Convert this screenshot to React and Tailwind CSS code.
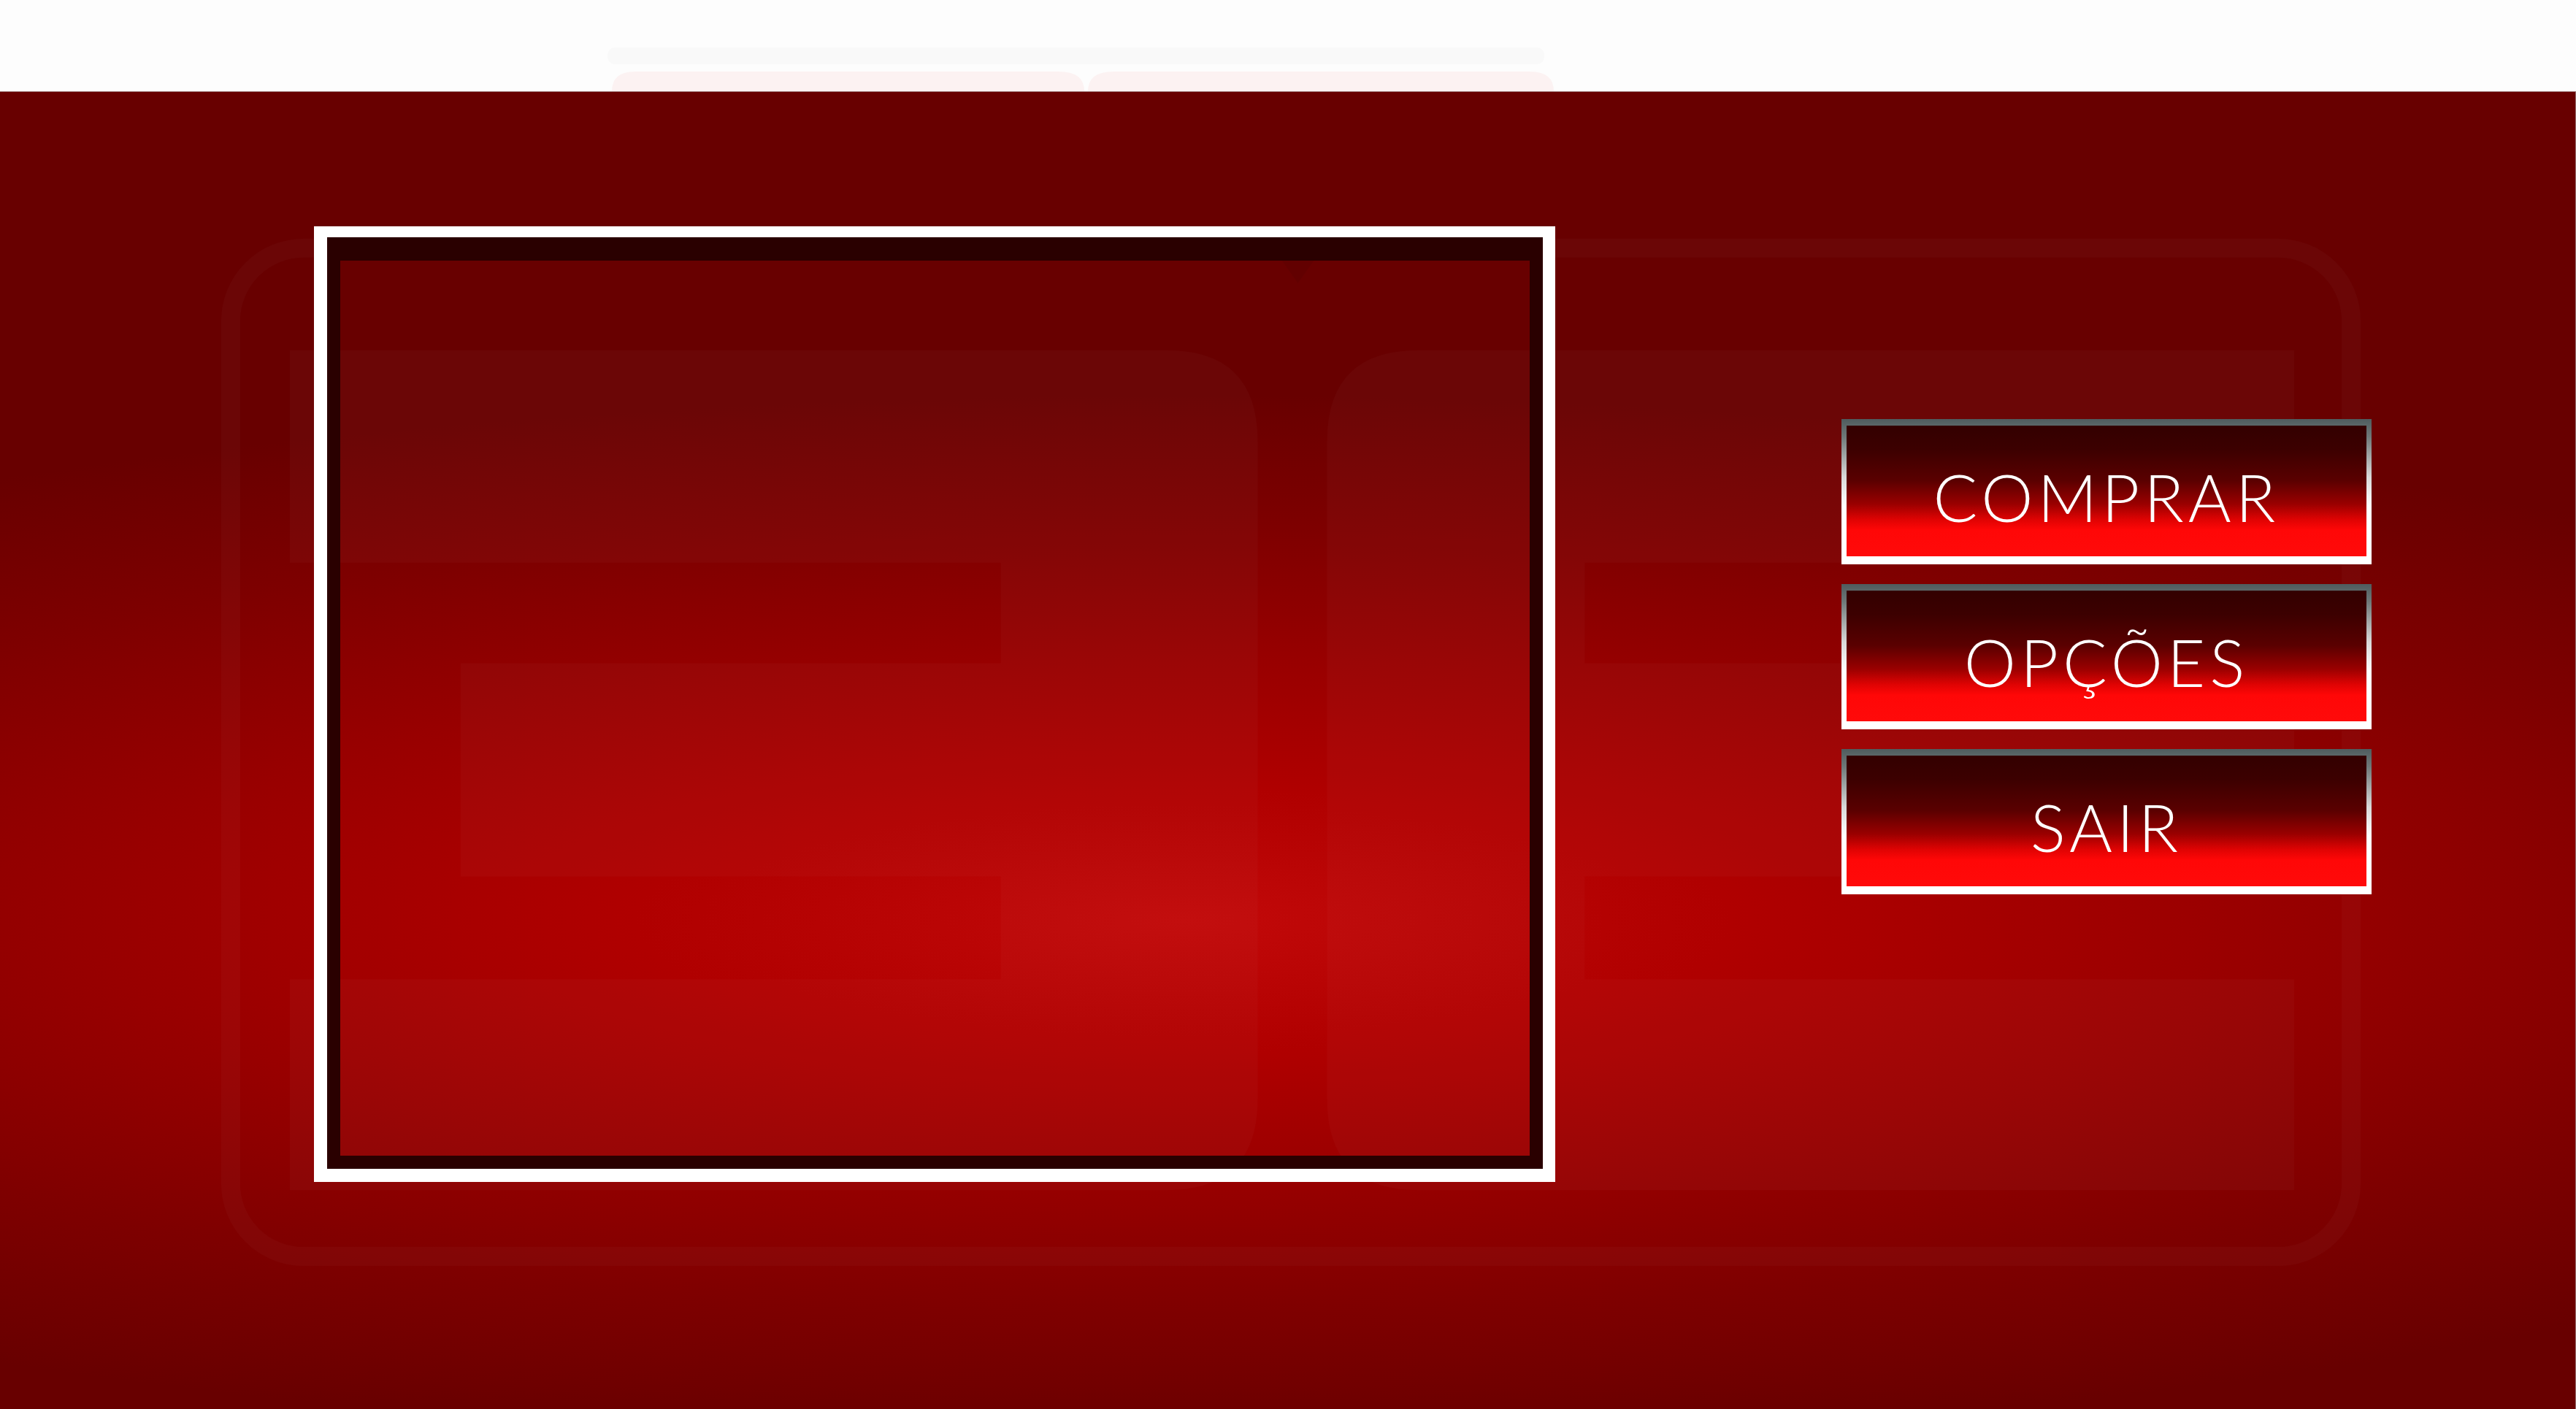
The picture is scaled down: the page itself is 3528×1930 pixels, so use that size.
import React from "react";

const buttons = ["COMPRAR", "OPÇÕES", "SAIR"];

const MenuButton = ({ label }) => (
  <div className="w-[726px] h-[199px] pt-[9px] px-[7px] pb-[11px] bg-[linear-gradient(180deg,#4f5c5e_0%,#6e7878_12%,#d9d9d9_40%,#ffffff_60%,#ffffff_100%)]">
    <button className="w-full h-full flex items-center justify-center pt-[14px] bg-[linear-gradient(180deg,#330000_0%,#3c0000_18%,#5a0000_42%,#9a0000_60%,#e00303_72%,#ff0707_80%,#ff0a0a_100%)] text-white text-[90px] font-light leading-none tracking-[6px] font-['Lato','Inter','Liberation_Sans',sans-serif]">
      {label}
    </button>
  </div>
);

// marca d'agua no fundo
const Watermark = () => (
  <svg className="absolute inset-0 w-full h-full pointer-events-none" viewBox="0 0 3528 1805" preserveAspectRatio="none">
    <rect x="316" y="214" width="2905" height="1382" rx="100" fill="none" stroke="rgba(255,255,255,0.022)" strokeWidth="26" />
    <path d="M1744 214 L1778 262 L1812 214 Z" fill="rgba(0,0,0,0.05)" />
    <g fill="rgba(255,255,255,0.024)">
      <path d="M397 354 H1598 Q1723 354 1723 479 V1380 Q1723 1505 1598 1505 H397 V1216 H1371 V1075 H631 V783 H1371 V645 H397 Z" />
      <path d="M1943 354 H3143 V645 H2171 V783 H3143 V1075 H2171 V1216 H3143 V1505 H1943 Q1818 1505 1818 1380 V479 Q1818 354 1943 354 Z" />
    </g>
  </svg>
);

const App = () => {
  return (
    <div className="w-[3528px] h-[1930px] flex flex-col bg-white overflow-hidden">
      {/* topo branco */}
      <div className="relative h-[125px] shrink-0 bg-[#fdfdfd]">
        <svg className="absolute inset-0 w-full h-full" viewBox="0 0 3528 125">
          <rect x="832" y="65" width="1283" height="23" rx="10" fill="#f9f9f9" />
          <path d="M838 125 Q838 98 870 98 H1450 Q1485 98 1485 125 Z" fill="#fcf2f2" />
          <path d="M1490 125 Q1490 98 1525 98 H2095 Q2128 98 2128 125 Z" fill="#fcf2f2" />
        </svg>
      </div>

      {/* area vermelha */}
      <div className="relative flex-1 flex items-start pl-[430px] pt-[184px] border-t border-r border-[#9a7070] bg-[radial-gradient(ellipse_3000px_720px_at_1620px_1135px,#c20909_0%,#b00000_25%,#980000_50%,#7e0000_75%,#680000_100%)]">
        <Watermark />

        {/* moldura */}
        <div className="relative w-[1700px] h-[1309px] flex border-white border-t-[15px] border-l-[18px] border-r-[17px] border-b-[18px]">
          <div className="flex-1 border-[#2a0000] border-t-[32px] border-x-[18px] border-b-[18px]" />
        </div>

        {/* botoes */}
        <div className="relative ml-[392px] mt-[264px] flex flex-col gap-[27px]">
          {buttons.map((b) => (
            <MenuButton key={b} label={b} />
          ))}
        </div>
      </div>
    </div>
  );
};

export default App;
